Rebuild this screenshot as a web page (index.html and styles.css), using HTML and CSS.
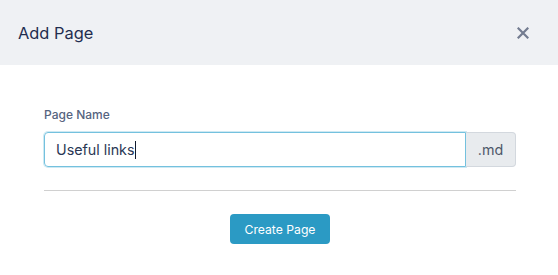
FILE: index.html
```html
<!DOCTYPE html>
<html>
<head>
<meta charset="utf-8">
<link rel="stylesheet" href="styles.css">
</head>
<body>
<div class="modal">
  <div class="modal-header">
    <h1 class="modal-title">Add Page</h1>
    <button class="close" aria-label="Close">
      <svg width="12" height="12" viewBox="0 0 12 12"><path d="M1.5 1.5 L10.5 10.5 M10.5 1.5 L1.5 10.5" stroke="#737c90" stroke-width="2.2" stroke-linecap="square" fill="none"/></svg>
    </button>
  </div>
  <div class="modal-body">
    <label class="field-label">Page Name</label>
    <div class="input-group">
      <div class="input"><span class="value">Useful links</span><span class="caret"></span></div>
      <div class="addon">.md</div>
    </div>
    <hr class="divider">
    <div class="actions">
      <button class="btn-primary">Create Page</button>
    </div>
  </div>
</div>
</body>
</html>
```

FILE: styles.css
```css
* { box-sizing: border-box; }
html, body { margin: 0; padding: 0; background: #ffffff; }
body { font-family: Inter, "Noto Sans", sans-serif; width: 558px; height: 275px; overflow: hidden; }
.modal { width: 560px; }
.modal-header {
  height: 65px;
  background: #eff1f4;
  display: flex;
  align-items: center;
  justify-content: space-between;
  padding: 0 31px 0 18px;
}
.modal-title {
  margin: 0;
  font-size: 16.4px;
  font-weight: 400;
  color: #1f2d4f;
  line-height: 22px;
}
.close {
  border: 0;
  background: transparent;
  padding: 0;
  width: 12px;
  height: 12px;
  display: flex;
}
.modal-body { padding: 42px 44px 20px 44px; }
.field-label {
  display: block;
  font-size: 12px;
  line-height: 16px;
  font-weight: 500;
  color: #56647f;
  margin-bottom: 9px;
}
.input-group { display: flex; height: 35px; }
.input {
  flex: 1;
  border: 1px solid #74c1de;
  border-radius: 4px 0 0 4px;
  display: flex;
  align-items: center;
  padding-left: 11px;
  font-size: 14.3px;
  color: #2a3754;
  box-shadow: 0 0 0 1px rgba(116,193,222,0.35);
}
.caret { display: inline-block; width: 1px; height: 18px; background: #111a2e; }
.addon {
  width: 50px;
  background: #e8ebee;
  border: 1px solid #d3d8de;
  border-left: 0;
  border-radius: 0 4px 4px 0;
  display: flex;
  align-items: center;
  justify-content: center;
  font-size: 14.3px;
  color: #4e586a;
}
.divider { border: 0; border-top: 1px solid #d0d0d0; margin: 23px 0 23px 0; }
.actions { display: flex; justify-content: center; }
.btn-primary {
  width: 100px;
  height: 30px;
  background: #2b9ac4;
  color: #ffffff;
  border: 0;
  border-radius: 4px;
  font-family: Inter, "Noto Sans", sans-serif;
  font-size: 12.2px;
  font-weight: 400;
  padding: 0;
}
```
